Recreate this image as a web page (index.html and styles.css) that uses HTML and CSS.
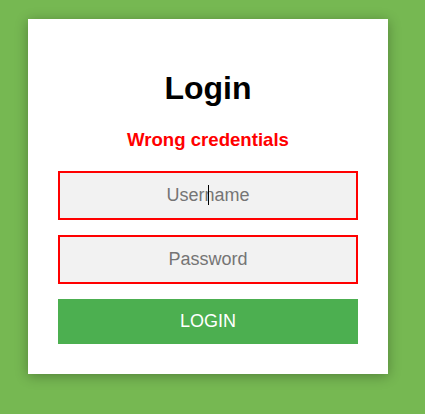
FILE: index.html
```html
<!DOCTYPE html>
<html>
<head>
<meta charset="utf-8">
<link rel="stylesheet" href="styles.css">
</head>
<body>
<div class="page">
  <form class="card">
    <h1 class="title">Login</h1>
    <p class="error">Wrong credentials</p>
    <div class="field-wrap">
      <input class="field" type="text" placeholder="Username">
      <span class="caret"></span>
    </div>
    <input class="field" type="password" placeholder="Password">
    <button class="btn" type="button">LOGIN</button>
  </form>
</div>
</body>
</html>
```

FILE: styles.css
```css
html, body {
  margin: 0;
  padding: 0;
  background: #76b852;
  font-family: "Liberation Sans", Arial, sans-serif;
}
.page {
  padding: 19px 0 0 28px;
  min-height: 414px;
  box-sizing: border-box;
}
.card {
  width: 360px;
  box-sizing: border-box;
  background: #ffffff;
  padding: 0 30px 30px;
  display: flex;
  flex-direction: column;
  box-shadow: 0 2px 12px rgba(0, 0, 0, 0.3);
}
.title {
  margin: 51px 0 0;
  font-size: 32px;
  line-height: 37px;
  font-weight: bold;
  text-align: center;
  color: #000;
}
.error {
  margin: 22px 0 0;
  font-size: 18.6px;
  line-height: 21px;
  font-weight: bold;
  color: #ff0000;
  text-align: center;
}
.field-wrap {
  position: relative;
  display: flex;
  flex-direction: column;
  margin-top: 21px;
}
.caret {
  position: absolute;
  left: 150px;
  top: 14px;
  width: 1px;
  height: 20px;
  background: #000;
}
.field {
  margin: 0;
  height: 49px;
  box-sizing: border-box;
  border: 2px solid #ff0000;
  background: #f2f2f2;
  font-family: "Liberation Sans", Arial, sans-serif;
  font-size: 18px;
  text-align: center;
  outline: none;
  padding: 0 10px;
  color: #333;
}
.field-wrap + .field {
  margin-top: 15px;
}
.field::placeholder {
  color: #757575;
}
.btn {
  margin-top: 15px;
  height: 45px;
  border: 0;
  background: #4caf50;
  color: #ffffff;
  font-family: "Liberation Sans", Arial, sans-serif;
  font-size: 18px;
  cursor: pointer;
}
```
